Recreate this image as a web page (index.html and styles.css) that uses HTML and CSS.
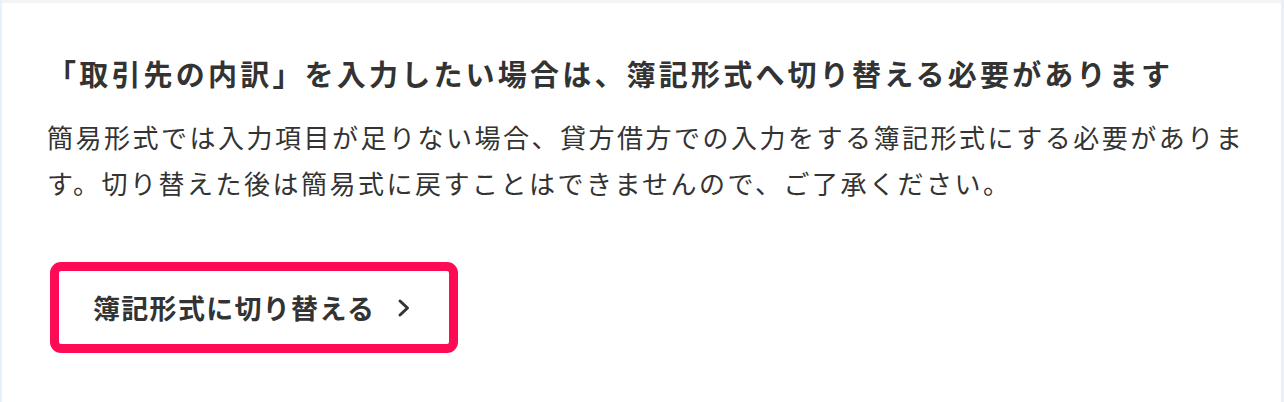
FILE: index.html
```html
<!DOCTYPE html>
<html lang="ja">
<head>
<meta charset="utf-8">
<link rel="stylesheet" href="styles.css">
</head>
<body>
<div class="frame">
  <div class="edge-left"></div>
  <div class="main">
    <div class="topbar"></div>
    <section class="card">
      <h2 class="title">「取引先の内訳」を入力したい場合は、簿記形式へ切り替える必要があります</h2>
      <p class="desc">簡易形式では入力項目が足りない場合、貸方借方での入力をする簿記形式にする必要があります。切り替えた後は簡易式に戻すことはできませんので、ご了承ください。</p>
      <div class="action">
        <button class="switch-btn" type="button">
          <span class="btn-label">簿記形式に切り替える</span>
          <svg class="chev" width="14" height="20" viewBox="0 0 14 20" aria-hidden="true"><path d="M3 3 L10.5 10 L3 17" fill="none" stroke="#333" stroke-width="3" stroke-linecap="round" stroke-linejoin="round"/></svg>
        </button>
      </div>
    </section>
  </div>
  <div class="edge-right"></div>
</div>
</body>
</html>
```
FILE: styles.css
```css
html, body {
  margin: 0;
  padding: 0;
  background: #ffffff;
}
body {
  font-family: "Noto Sans CJK JP", "Noto Sans", sans-serif;
  color: #333333;
}
.frame {
  display: flex;
  width: 1284px;
  height: 402px;
  overflow: hidden;
}
.edge-left {
  width: 2px;
  background: #e8f1fb;
  flex: none;
}
.edge-right {
  width: 3px;
  background: #e8f1fb;
  flex: none;
}
.main {
  flex: 1;
  display: flex;
  flex-direction: column;
}
.topbar {
  height: 3px;
  background: #f3f4f6;
  flex: none;
}
.card {
  flex: 1;
  background: #ffffff;
  padding: 50px 0 0 45px;
}
.title {
  margin: 0;
  font-size: 29px;
  line-height: 40px;
  font-weight: 700;
  letter-spacing: 3.2px;
  white-space: nowrap;
}
.desc {
  margin: 21px 0 0;
  max-width: 1210px;
  font-size: 26px;
  line-height: 46px;
  letter-spacing: 2.5px;
  font-weight: 400;
}
.action {
  margin-top: 56px;
  margin-left: 3px;
}
.switch-btn {
  display: flex;
  align-items: center;
  box-sizing: border-box;
  width: 408px;
  height: 91px;
  padding: 0 0 0 34px;
  border: 9px solid #ff0a55;
  border-radius: 11px;
  background: #ffffff;
  font-family: "Noto Sans CJK JP", "Noto Sans", sans-serif;
  color: #333333;
  cursor: pointer;
}
.btn-label {
  font-size: 27px;
  font-weight: 700;
  letter-spacing: 1.3px;
  line-height: 1;
}
.chev {
  margin-left: 22px;
  flex: none;
}
```
